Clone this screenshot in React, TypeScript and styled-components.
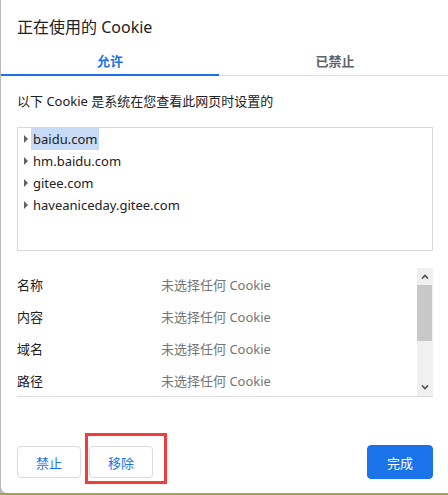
import React from 'react';
import styled, { createGlobalStyle } from 'styled-components';

const GlobalStyle = createGlobalStyle`
  html, body {
    margin: 0;
    padding: 0;
    background: #b9b9b9;
  }
  body {
    font-family: "Noto Sans", "Noto Sans CJK SC", sans-serif;
  }
`;

const Page = styled.div`
  width: 448px;
  height: 495px;
  padding-left: 1px;
  box-sizing: border-box;
  background: #b9b9b9;
  border-bottom: 2px solid #a1a64c;
  overflow: hidden;
`;

const Dialog = styled.div`
  width: 450px;
  height: 493px;
  background: #fff;
  border-radius: 0 0 0 6px;
  display: flex;
  flex-direction: column;
  color: #202124;
`;

const Title = styled.h1`
  margin: 0;
  padding: 17px 16px 0;
  font-size: 16px;
  line-height: 20px;
  font-weight: 400;
  color: #202124;
`;

const TabBar = styled.div`
  display: flex;
  box-shadow: inset 0 -1px 0 #dadce0;
`;

const Tab = styled.div<{ $active?: boolean; $width?: number }>`
  ${(p) => (p.$width ? `width: ${p.$width}px;` : 'flex: 1;')}
  height: 39px;
  box-sizing: border-box;
  padding-top: 14px;
  text-align: center;
  font-size: 13px;
  line-height: 20px;
  font-weight: 700;
  color: ${(p) => (p.$active ? '#1a73e8' : '#5f6368')};
  box-shadow: ${(p) => (p.$active ? 'inset 0 -2px 0 #1a73e8' : 'none')};
`;

const Body = styled.div`
  padding: 0 18px 0 16px;
  display: flex;
  flex-direction: column;
  flex: 1;
`;

const Description = styled.p`
  margin: 15px 0 0;
  font-size: 13px;
  line-height: 20px;
  color: #202124;
`;

const TreeBox = styled.div`
  margin-top: 16px;
  height: 124px;
  box-sizing: border-box;
  border: 1px solid #dadada;
  padding-top: 0;
`;

const TreeItem = styled.div`
  display: flex;
  align-items: center;
  height: 22px;
  padding-left: 6px;
`;

const Arrow = styled.span`
  width: 0;
  height: 0;
  border-top: 4px solid transparent;
  border-bottom: 4px solid transparent;
  border-left: 4px solid #5f6368;
  margin-right: 5px;
`;

const ItemLabel = styled.span<{ $selected?: boolean }>`
  font-size: 13px;
  line-height: 22px;
  padding: 0 2px 0 2px;
  margin-left: -2px;
  color: #202124;
  background: ${(p) => (p.$selected ? '#c7dbf6' : 'transparent')};
`;

const Details = styled.div`
  margin-top: 17px;
  display: flex;
  border-bottom: 1px solid #dadce0;
`;

const DetailRows = styled.div`
  flex: 1;
`;

const DetailRow = styled.div`
  display: flex;
  align-items: center;
  height: 32px;
  font-size: 13px;
`;

const DetailLabel = styled.span`
  width: 144px;
  color: #202124;
`;

const DetailValue = styled.span`
  color: #757575;
`;

const Scrollbar = styled.div`
  width: 16px;
  height: 128px;
  background: #f0f0f0;
  display: flex;
  flex-direction: column;
  align-items: center;
`;

const ScrollArrow = styled.div`
  height: 17px;
  width: 16px;
  display: flex;
  align-items: center;
  justify-content: center;
`;

const ScrollTrack = styled.div`
  flex: 1;
  width: 16px;
`;

const ScrollThumb = styled.div`
  width: 15px;
  height: 56px;
  background: #c8c8c8;
`;

const Footer = styled.div`
  display: flex;
  align-items: center;
  gap: 8px;
  padding: 48px 18px 14px 16px;
`;

const Button = styled.button<{ $primary?: boolean }>`
  position: relative;
  height: ${(p) => (p.$primary ? 34 : 32)}px;
  min-width: ${(p) => (p.$primary ? 66 : 64)}px;
  box-sizing: border-box;
  border-radius: 4px;
  border: 1px solid ${(p) => (p.$primary ? '#1a73e8' : '#dadce0')};
  background: ${(p) => (p.$primary ? '#1a73e8' : '#fff')};
  color: ${(p) => (p.$primary ? '#fff' : '#1a73e8')};
  font-family: inherit;
  font-size: 13px;
  padding: 0;
  ${(p) => (p.$primary ? 'margin-left: auto;' : '')}
`;

const Highlight = styled.span`
  position: absolute;
  left: -5px;
  top: -14px;
  width: 82px;
  height: 51px;
  box-sizing: border-box;
  border: 3px solid #f53c3c;
  pointer-events: none;
`;

const Chevron: React.FC<{ up?: boolean }> = ({ up }) => (
  <svg width="8" height="5" viewBox="0 0 8 5">
    <path
      d={up ? 'M1 4.5 L4 1.5 L7 4.5' : 'M1 0.5 L4 3.5 L7 0.5'}
      fill="none"
      stroke="#505050"
      strokeWidth="1.6"
    />
  </svg>
);

const sites = ['baidu.com', 'hm.baidu.com', 'gitee.com', 'haveaniceday.gitee.com'];
const fields = ['名称', '内容', '域名', '路径'];

const App: React.FC = () => {
  return (
    <>
      <GlobalStyle />
      <Page>
        <Dialog>
          <Title>正在使用的 Cookie</Title>
          <TabBar>
            <Tab $active $width={218}>允许</Tab>
            <Tab>已禁止</Tab>
          </TabBar>
          <Body>
            <Description>以下 Cookie 是系统在您查看此网页时设置的</Description>
            <TreeBox>
              {sites.map((s, i) => (
                <TreeItem key={s}>
                  <Arrow />
                  <ItemLabel $selected={i === 0}>{s}</ItemLabel>
                </TreeItem>
              ))}
            </TreeBox>
            <Details>
              <DetailRows>
                {fields.map((f) => (
                  <DetailRow key={f}>
                    <DetailLabel>{f}</DetailLabel>
                    <DetailValue>未选择任何 Cookie</DetailValue>
                  </DetailRow>
                ))}
              </DetailRows>
              <Scrollbar>
                <ScrollArrow>
                  <Chevron up />
                </ScrollArrow>
                <ScrollTrack>
                  <ScrollThumb />
                </ScrollTrack>
                <ScrollArrow>
                  <Chevron />
                </ScrollArrow>
              </Scrollbar>
            </Details>
          </Body>
          <Footer>
            <Button>禁止</Button>
            <Button>
              移除
              <Highlight />
            </Button>
            <Button $primary>完成</Button>
          </Footer>
        </Dialog>
      </Page>
    </>
  );
};

export default App;
